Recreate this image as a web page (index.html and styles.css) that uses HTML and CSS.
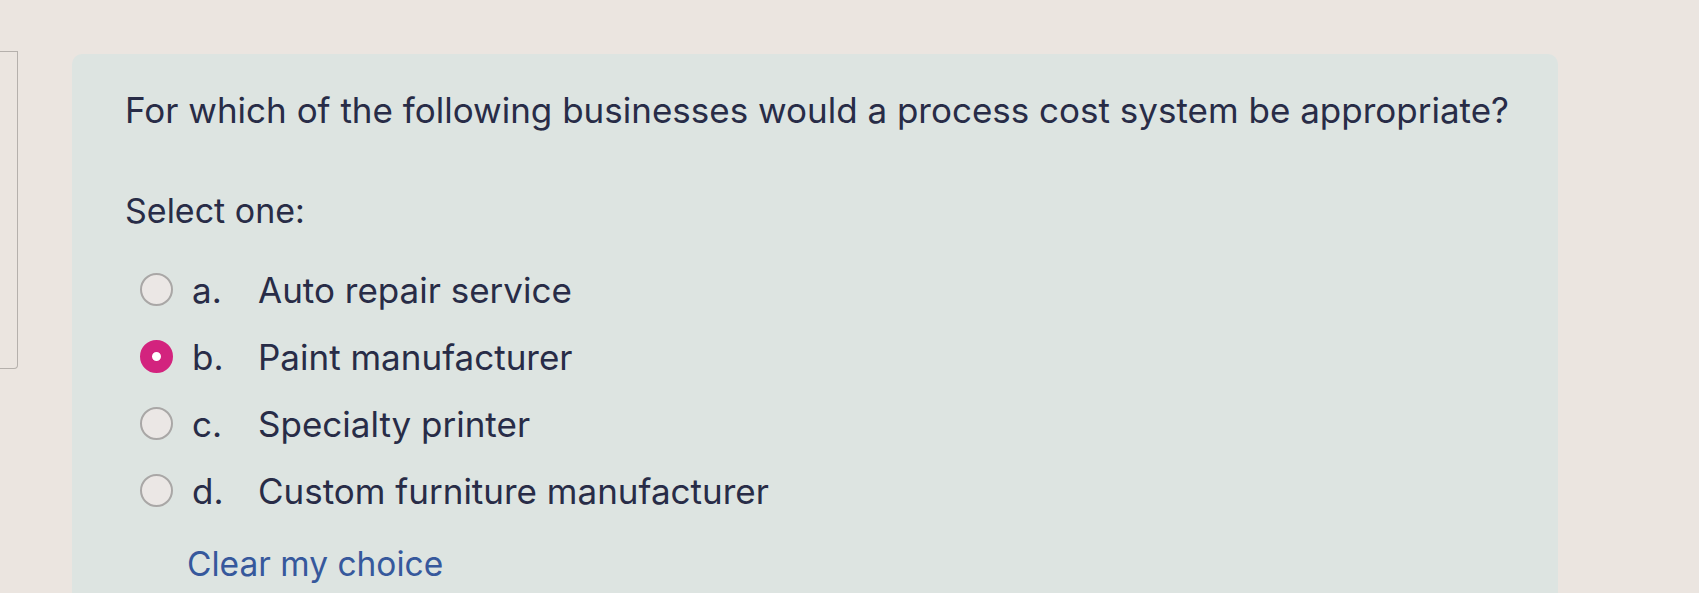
FILE: index.html
```html
<!DOCTYPE html>
<html lang="en">
<head>
<meta charset="UTF-8">
<meta name="viewport" content="width=device-width, initial-scale=1.0">
<title>Question</title>
<link rel="stylesheet" href="styles.css">
</head>
<body>
<div class="page">
    <div class="sidebox"></div>
    <div class="question">
        <p class="qtext">For which of the following businesses would a process cost system be appropriate?</p>
        <p class="prompt">Select one:</p>
        <div class="answers">
            <label class="answer">
                <span class="radio"></span>
                <span class="letter">a.</span>
                <span class="label">Auto repair service</span>
            </label>
            <label class="answer">
                <span class="radio checked"></span>
                <span class="letter">b.</span>
                <span class="label">Paint manufacturer</span>
            </label>
            <label class="answer">
                <span class="radio"></span>
                <span class="letter">c.</span>
                <span class="label">Specialty printer</span>
            </label>
            <label class="answer">
                <span class="radio"></span>
                <span class="letter">d.</span>
                <span class="label">Custom furniture manufacturer</span>
            </label>
        </div>
        <a class="clear" href="#">Clear my choice</a>
    </div>
</div>
</body>
</html>
```
FILE: styles.css
```css
body {
    margin: 0;
    padding: 0;
    background-color: #ebe5e0;
    overflow: hidden;
}

* {
    font-family: Inter, "Liberation Sans", sans-serif;
}

.page {
    display: flex;
    align-items: flex-start;
    height: 593px;
    overflow: hidden;
}

.sidebox {
    width: 17px;
    height: 316px;
    margin-top: 51px;
    border: 1px solid #b5b0ac;
    border-left: none;
    border-radius: 0 0 4px 0;
    background-color: #ebe5e0;
}

.question {
    margin-left: 54px;
    margin-top: 54px;
    width: 1433px;
    height: 600px;
    padding: 34px 0 0 53px;
    background-color: #dde4e1;
    border-radius: 10px 10px 0 0;
    color: #282c47;
}

.qtext {
    margin: 0;
    font-size: 35px;
    line-height: 44px;
}

.prompt {
    margin: 57px 0 0 0;
    font-size: 34px;
    line-height: 44px;
}

.answers {
    margin-top: 23px;
}

.answer {
    display: flex;
    align-items: center;
    height: 67px;
    font-size: 35px;
}

.radio {
    box-sizing: border-box;
    width: 33px;
    height: 33px;
    margin-left: 15px;
    margin-right: 19px;
    border: 2px solid #a9a7a6;
    border-radius: 50%;
    background-color: #ebe7e5;
}

.radio.checked {
    border: 12px solid #d3237e;
    background-color: #fff;
}

.letter {
    width: 66px;
}

.clear {
    display: inline-block;
    margin: 20px 0 0 62px;
    font-size: 33.5px;
    color: #36589c;
    text-decoration: none;
}
```
